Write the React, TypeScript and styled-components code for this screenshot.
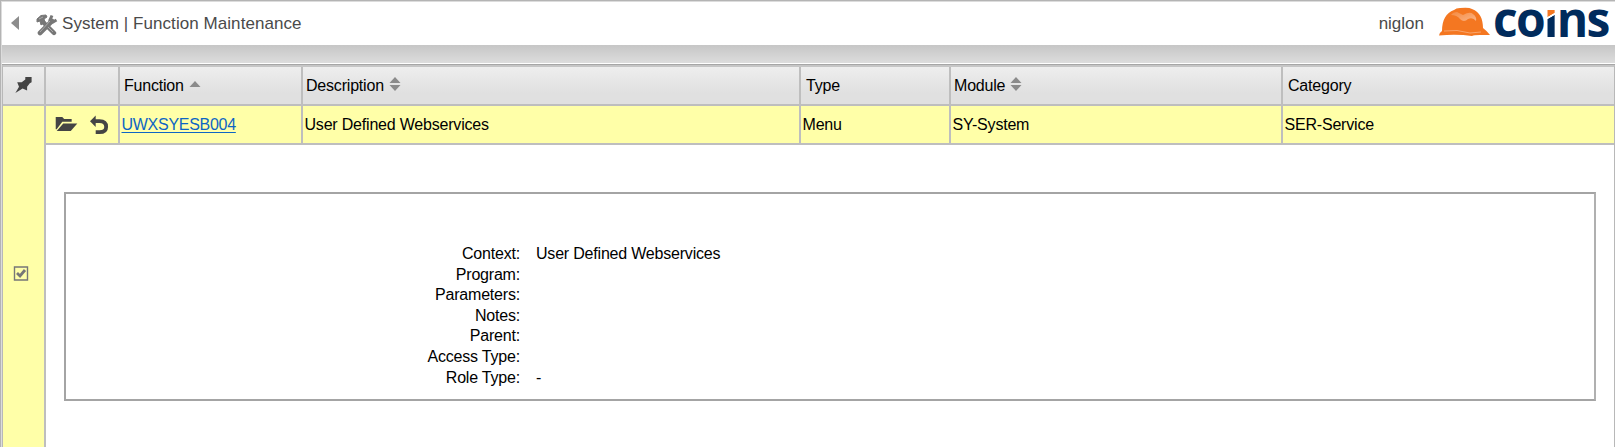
import React from "react";
import styled, { createGlobalStyle } from "styled-components";

const Global = createGlobalStyle`
  * { box-sizing: border-box; }
  body { margin: 0; background: #fff; overflow: hidden; }
`;

const Page = styled.div`
  width: 1615px;
  height: 447px;
  display: flex;
  flex-direction: column;
  border-left: 1px solid #b4b4b4;
  border-top: 1px solid #b4b4b4;
  box-shadow: inset 1px 1px 0 #dcdcdc;
  padding: 1px 0 0 1px;
  font-family: "Liberation Sans", Arial, sans-serif;
  font-size: 16px;
  color: #000;
`;

const TopBar = styled.header`
  height: 43px;
  flex: none;
  display: flex;
  align-items: center;
  padding: 0 4px 0 9px;
  color: #4a4a4a;
  font-size: 17px;
`;

const BackIcon = styled.svg`
  width: 8px;
  height: 14px;
  margin: -1px 17px 0 0;
`;

const ToolsIcon = styled.svg`
  width: 22px;
  height: 22px;
  margin: 2px 4px 0 0;
`;

const Title = styled.h1`
  flex: 1;
  margin: 1px 0 0;
  font: inherit;
  letter-spacing: 0.06px;
`;

const User = styled.span`
  margin: 1px 15px 0 0;
`;

const Brand = styled.div`
  display: flex;
  height: 43px;
  align-items: flex-start;
`;

const Helmet = styled.svg`
  width: 51px;
  height: 30px;
  margin: 5px 3px 0 0;
`;

const Wordmark = styled.span`
  width: 118px;
  height: 43px;
  font: bold 48px/34px "Open Sans", sans-serif;
  letter-spacing: -1.8px;
  color: #002b5c;
  white-space: nowrap;
`;

const AccentLetter = styled.span`
  background: linear-gradient(150deg, #f47721 0 45%, #fff 46% 48%, #002b5c 49%);
  background-clip: text;
  color: transparent;
`;

const Strip = styled.div`
  height: 20px;
  flex: none;
  background: linear-gradient(#c6c6c6, #dedede);
  border-bottom: 1px solid #a6a6a6;
  box-shadow: inset 0 -1px 0 #fff;
`;

const Grid = styled.main`
  flex: 1;
  display: grid;
  grid-template-columns: 43px 1fr;
  grid-template-rows: 39px 1fr;
  border: 1px solid #b8b8b8;
  border-top: 2px solid #c6c6c6;
  border-bottom: 0;
`;

const Corner = styled.div`
  display: flex;
  align-items: center;
  justify-content: center;
  padding-bottom: 2px;
  background: linear-gradient(#eee, #e0e0e0 70%);
  border-right: 2px solid #bebebe;
  border-bottom: 2px solid #bebebe;
`;

const Selection = styled.div`
  display: flex;
  align-items: flex-start;
  padding: 160px 0 0 10px;
  background: #ffffa8;
  border-right: 2px solid #bebebe;
`;

const Row = styled.div<{ $head?: boolean }>`
  display: grid;
  grid-template-columns: 74px 183px 498px 150px 332px 1fr;
  height: 39px;
  background: ${(p) => (p.$head ? "linear-gradient(#eee, #e0e0e0 70%)" : "#ffffa8")};
  border-bottom: 2px solid #bebebe;
`;

const Cell = styled.div<{ $pad?: number }>`
  display: flex;
  align-items: center;
  padding-left: ${(p) => p.$pad ?? 1.5}px;
  border-right: 2px solid #bebebe;
  letter-spacing: -0.2px;
  white-space: nowrap;
  &:last-child { border-right: 0; }
`;

const SortIcon = styled.svg`
  width: 12px;
  height: 14px;
  margin: -3px 0 0 5px;
`;

const FunctionLink = styled.a`
  color: #0d65c4;
  text-decoration: underline;
  text-underline-offset: 2px;
  letter-spacing: -0.28px;
`;

const Details = styled.section`
  height: 209px;
  margin: 47px 18px 0;
  padding: 49px 0 0;
  border: 2px solid #a4a4a4;
  border-right-color: #b0b0b0;
`;

const Field = styled.div`
  display: grid;
  grid-template-columns: 454px 1fr;
  column-gap: 16px;
  height: 20.6px;
  line-height: 21px;
`;

const Label = styled.span`
  text-align: right;
  letter-spacing: -0.2px;
`;

const Value = styled.span`
  letter-spacing: -0.2px;
`;

const Icon = styled.svg`
  display: block;
`;

const IconGroup = styled.div`
  display: flex;
  align-items: center;
  gap: 12px;
`;

const fields = [
  ["Context:", "User Defined Webservices"],
  ["Program:", ""],
  ["Parameters:", ""],
  ["Notes:", ""],
  ["Parent:", ""],
  ["Access Type:", ""],
  ["Role Type:", "-"],
];

const Sort = ({ up }: { up?: boolean }) => (
  <SortIcon viewBox="0 0 12 14" fill="#8b8b8b">
    {up ? (
      <path d="M6 4 11.500 10H0.500Z" />
    ) : (
      <>
        <path d="M6 0 11.500 6H0.500Z" />
        <path d="M0.500 8H11.500L6 14Z" />
      </>
    )}
  </SortIcon>
);

export default function App() {
  return (
    <Page>
      <Global />
      <TopBar>
        <BackIcon viewBox="0 0 8 14"><path d="M0 7 8 0V14Z" fill="#8d8d8d" /></BackIcon>
        <ToolsIcon viewBox="0 0 22 22" fill="none" stroke="#777">
          <path d="M7 8 18 19" strokeWidth="4.4" strokeLinecap="round" />
          <path d="M16 7 4 19" strokeWidth="4.6" strokeLinecap="round" />
          <path d="M1 8V5L5 1.500 10 1 11 3 8 5 9 8 5 11 4 7Z" fill="#777" />
          <path d="M16 1.500 14 6 17 8 20.500 6" strokeWidth="3" />
          <path d="M14 7 4 18M3 5 7 3M12 13 17 18" stroke="#aaa" strokeWidth="1" />
        </ToolsIcon>
        <Title>System | Function Maintenance</Title>
        <User>niglon</User>
        <Brand aria-label="coins">
          <Helmet viewBox="0 0 51 30">
            <defs>
              <linearGradient id="shine" x1="0" y1="0" x2="1" y2="1">
                <stop offset="0" stopColor="#f58a40" />
                <stop offset="1" stopColor="#fab486" />
              </linearGradient>
            </defs>
            <path d="M0 28.500Q0 26 3 24C3 13 7 6 15 3Q17 1 21 1Q30 0 33 2C41 5 44 12 44 21Q48 24 51 28H41Q35 28 33 29Q18 27 0 28.500Z" fill="#f47721" />
            <path d="M12 8Q14 5 18 5L24 8Q31 4 34 7Q38 10 37 14Q34 10 29 12Q25 16 21 12Q18 8 12 8Z" fill="url(#shine)" />
            <path d="M5 24Q18 22 31 26L42 25" fill="none" stroke="#f9a56c" />
          </Helmet>
          <Wordmark>co<AccentLetter>ı</AccentLetter>ns</Wordmark>
        </Brand>
      </TopBar>
      <Strip />
      <Grid>
        <Corner>
          <Icon width="19" height="18" viewBox="0 0 20 20" fill="#444">
            <path d="M12 1 19 1V7L17 8 14 12V16L9 14 1 19 5 12 3 7H8L12 4Z" />
          </Icon>
        </Corner>
        <Row $head>
          <Cell />
          <Cell $pad={4}>Function <Sort up /></Cell>
          <Cell $pad={3}>Description <Sort /></Cell>
          <Cell $pad={5}>Type</Cell>
          <Cell $pad={3}>Module <Sort /></Cell>
          <Cell $pad={5}>Category</Cell>
        </Row>
        <Selection>
          <Icon width="16" height="15" viewBox="0 0 16 15" fill="none" stroke="#777">
            <path d="M1.500 1H14.500V14H1.500Z" strokeWidth="1.4" />
            <path d="M4 7 7 10 12 4" strokeWidth="2.8" />
          </Icon>
        </Selection>
        <div>
          <Row>
            <Cell $pad={9}>
              <IconGroup>
                <Icon width="23" height="15" viewBox="0 0 23 16" fill="#444">
                  <path d="M0 0H7L9 2H17V5H7L1 13H0Z" />
                  <path d="M8 7H23L16 15H1Z" />
                </Icon>
                <Icon width="19" height="20" viewBox="0 0 20 20">
                  <path d="M0 6 6 0V12Z" fill="#444" />
                  <path d="M4 6H10Q17 6 17 12Q17 17.500 10 17.500H6" fill="none" stroke="#444" strokeWidth="4" />
                </Icon>
              </IconGroup>
            </Cell>
            <Cell><FunctionLink href="#">UWXSYESB004</FunctionLink></Cell>
            <Cell>User Defined Webservices</Cell>
            <Cell>Menu</Cell>
            <Cell>SY-System</Cell>
            <Cell>SER-Service</Cell>
          </Row>
          <Details>
            {fields.map(([label, value]) => (
              <Field key={label}><Label>{label}</Label><Value>{value}</Value></Field>
            ))}
          </Details>
        </div>
      </Grid>
    </Page>
  );
}
